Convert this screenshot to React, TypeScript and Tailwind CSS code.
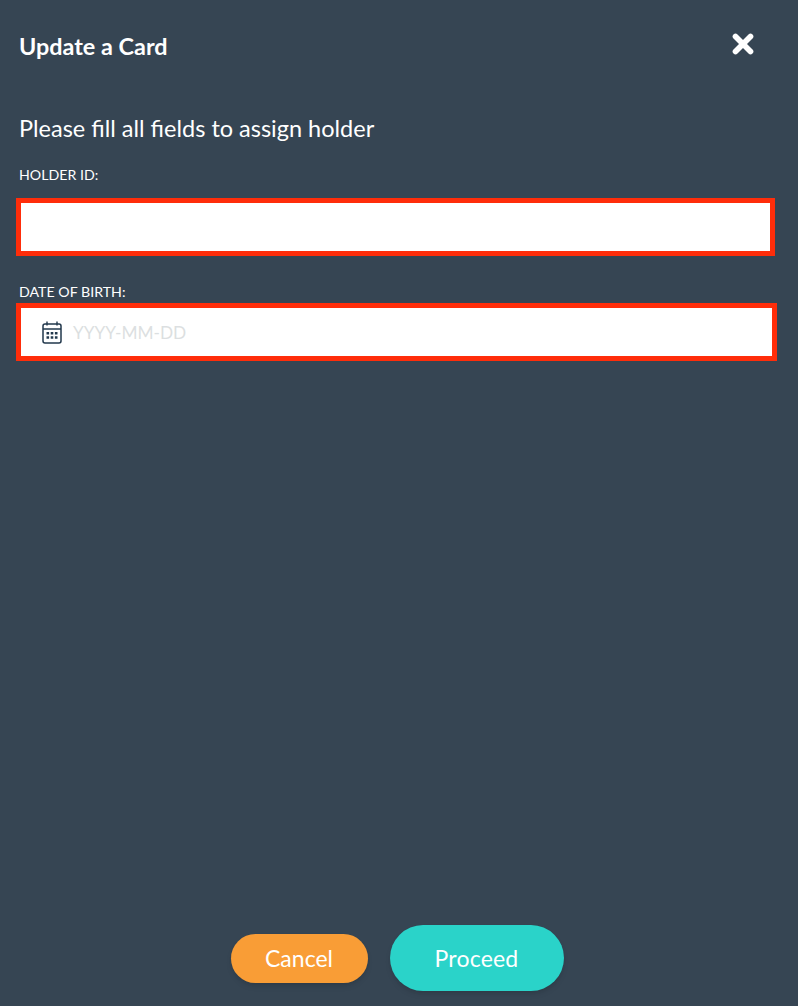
import { X } from "lucide-react";

const fieldClass = "flex items-center border-[5px] border-[#ff2d0a] bg-white";

function CalendarIcon() {
  return (
    <svg width="20" height="23" viewBox="0 0 20 23" fill="none" className="shrink-0">
      <rect x="1" y="3" width="18" height="19" rx="2" stroke="#22384c" strokeWidth="1.5" />
      <path d="M1 8h18" stroke="#22384c" strokeWidth="1.5" />
      <path d="M5 0.5v4M15 0.5v4" stroke="#22384c" strokeWidth="1.4" />
      <path
        d="M4.5 11h2.6v2.6H4.5zM8.7 11h2.6v2.6H8.7zM12.9 11h2.6v2.6h-2.6zM4.5 15.2h2.6v2.6H4.5zM8.7 15.2h2.6v2.6H8.7zM12.9 15.2h2.6v2.6h-2.6z"
        fill="#22384c"
      />
    </svg>
  );
}

export default function App() {
  return (
    <div className="flex h-[1006px] flex-col overflow-hidden bg-[#364553] font-['Lato','Noto_Sans',sans-serif] text-white">
      {/* Header */}
      <div className="flex items-center justify-between pl-[19px] pr-[40px] pt-[29px]">
        <h1 className="text-[23.4px] leading-[34px] font-bold">Update a Card</h1>
        <X className="mb-1 h-[30px] w-[30px]" strokeWidth={4.5} />
      </div>

      {/* Form */}
      <div className="pt-[48px]">
        <p className="pl-[19px] text-[23.5px] leading-[34px]">Please fill all fields to assign holder</p>

        <label className="mt-[20px] block pl-[19px] text-[14.2px] leading-5">HOLDER ID:</label>
        <div className={`${fieldClass} mt-[13px] ml-4 h-[58px] w-[759px]`} />

        <label className="mt-[26px] block pl-[19px] text-[14.2px] leading-5">DATE OF BIRTH:</label>
        <div className={`${fieldClass} mt-[1px] ml-4 h-[58px] w-[761px] pl-[21px]`}>
          <CalendarIcon />
          <span className="ml-[11px] pt-[2px] text-[17.3px] text-[#dcdfe1]">YYYY-MM-DD</span>
        </div>
      </div>

      {/* Actions */}
      <div className="mt-auto flex items-center justify-center gap-[22px] pr-[4px] pb-[15px]">
        <button className="h-[49px] w-[137px] rounded-full bg-[#f99d36] text-[23px] shadow-md">Cancel</button>
        <button className="h-[66px] w-[174px] rounded-full bg-[#2ad3c9] text-[23px] tracking-[0.2px] shadow-md">Proceed</button>
      </div>
    </div>
  );
}
